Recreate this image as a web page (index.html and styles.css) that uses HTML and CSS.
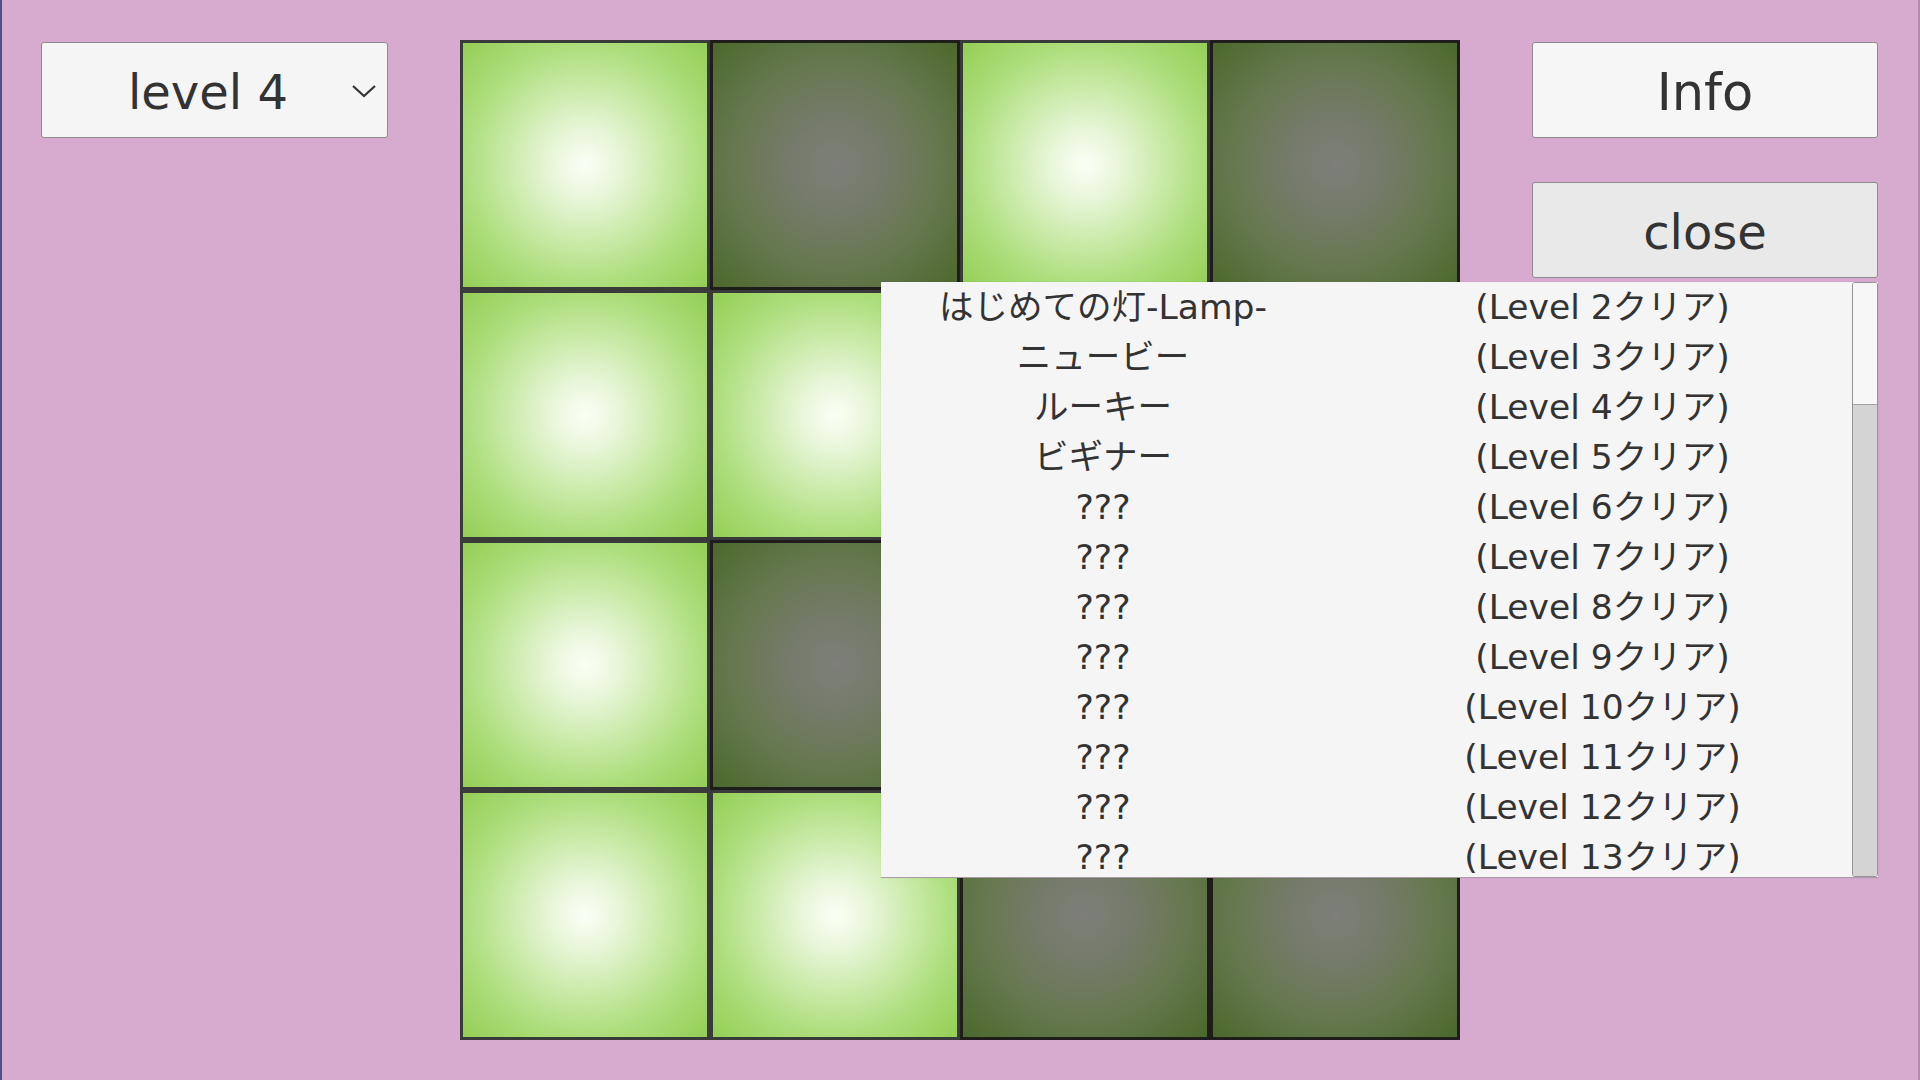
FILE: index.html
```html
<!DOCTYPE html>
<html lang="ja">
<head>
<meta charset="utf-8">
<title>Lamp</title>
<link rel="stylesheet" href="styles.css">
</head>
<body>
<div class="app">
  <div class="left-col">
    <div class="combo">
      <span class="combo-text">level 4</span>
      <svg class="chevron" width="26" height="16" viewBox="0 0 26 16"><polyline points="2,3 13,13 24,3" fill="none" stroke="#333" stroke-width="2.2"/></svg>
    </div>
  </div>

  <div class="board">
    <div class="cell on"></div><div class="cell off"></div><div class="cell on"></div><div class="cell off"></div>
    <div class="cell on"></div><div class="cell on"></div><div class="cell off"></div><div class="cell on"></div>
    <div class="cell on"></div><div class="cell off"></div><div class="cell on"></div><div class="cell off"></div>
    <div class="cell on"></div><div class="cell on"></div><div class="cell off"></div><div class="cell off"></div>
  </div>

  <div class="right-col">
    <div class="btn btn-info">Info</div>
    <div class="btn btn-close">close</div>
  </div>

  <div class="popup">
    <div class="list">
      <div class="row"><span class="name">はじめての灯-Lamp-</span><span class="cond">(Level 2クリア)</span></div>
      <div class="row"><span class="name">ニュービー</span><span class="cond">(Level 3クリア)</span></div>
      <div class="row"><span class="name">ルーキー</span><span class="cond">(Level 4クリア)</span></div>
      <div class="row"><span class="name">ビギナー</span><span class="cond">(Level 5クリア)</span></div>
      <div class="row"><span class="name">???</span><span class="cond">(Level 6クリア)</span></div>
      <div class="row"><span class="name">???</span><span class="cond">(Level 7クリア)</span></div>
      <div class="row"><span class="name">???</span><span class="cond">(Level 8クリア)</span></div>
      <div class="row"><span class="name">???</span><span class="cond">(Level 9クリア)</span></div>
      <div class="row"><span class="name">???</span><span class="cond">(Level 10クリア)</span></div>
      <div class="row"><span class="name">???</span><span class="cond">(Level 11クリア)</span></div>
      <div class="row"><span class="name">???</span><span class="cond">(Level 12クリア)</span></div>
      <div class="row"><span class="name">???</span><span class="cond">(Level 13クリア)</span></div>
    </div>
    <div class="scrollbar">
      <div class="track"></div>
      <div class="thumb"></div>
    </div>
  </div>
</div>
</body>
</html>
```

FILE: styles.css
```css
* { box-sizing: border-box; }

html, body {
  margin: 0;
  padding: 0;
  width: 1920px;
  height: 1080px;
  overflow: hidden;
}

body {
  background: #d6abcf;
  font-family: "DejaVu Sans", "Noto Sans CJK JP", sans-serif;
  color: #333333;
}

.app {
  position: relative;
  width: 1920px;
  height: 1080px;
  border-left: 2px solid #4e5282;
  border-right: 2px solid #b58bb2;
  display: flex;
  align-items: flex-start;
  padding: 40px 0 0 39px;
}

.left-col {
  width: 347px;
  padding-top: 2px;
}

.combo {
  height: 96px;
  background: #f5f5f5;
  border: 1px solid #908a90;
  border-radius: 3px;
  display: flex;
  align-items: center;
  padding: 4px 0 0 86px;
  position: relative;
}

.combo-text {
  font-size: 48px;
  line-height: 1;
}

.chevron {
  position: absolute;
  right: 10px;
  top: 40px;
}

.board {
  margin-left: 72px;
  width: 1000px;
  height: 1000px;
  display: grid;
  grid-template-columns: repeat(4, 250px);
  grid-template-rows: repeat(4, 250px);
}

.cell {
  border: 3.5px solid #3a3a3a;
}

.cell.on {
  background: radial-gradient(circle farthest-corner at 50% 50%, #fbfff6 0%, #e6f5d6 22%, #c6e9a3 48%, #aadc78 72%, #94cf55 100%);
}

.cell.off {
  border-color: #1f1c1c;
  background: radial-gradient(circle farthest-corner at 50% 50%, #7d7f78 0%, #767b6c 25%, #66784f 60%, #526c34 90%, #4c682c 100%);
}

.right-col {
  margin-left: 72px;
  width: 346px;
  padding-top: 2px;
  display: flex;
  flex-direction: column;
  gap: 44px;
}

.btn {
  height: 96px;
  background: #f6f6f6;
  border: 1px solid #908a90;
  border-radius: 3px;
  display: flex;
  align-items: center;
  justify-content: center;
  padding-top: 4px;
  line-height: 1;
}

.btn-info { font-size: 51px; }

.btn-close {
  font-size: 48px;
  background: #e9e9e9;
}

.popup {
  position: absolute;
  left: 879px;
  top: 282px;
  width: 997px;
  height: 596px;
  background: #f5f5f5;
  border-bottom: 1px solid #aa9aa8;
  display: flex;
  box-shadow: 0 0 1px rgba(0,0,0,0.15);
}

.list {
  flex: 1;
  overflow: hidden;
}

.row {
  height: 50px;
  display: grid;
  grid-template-columns: 444px 1fr;
  font-size: 34.5px;
  line-height: 50px;
  white-space: nowrap;
}

.name { text-align: center; }

.cond {
  text-align: center;
  padding-left: 28px;
}

.scrollbar {
  width: 26px;
  display: flex;
  flex-direction: column;
  border: 1px solid #9a929a;
  border-radius: 3px;
  overflow: hidden;
}

.track {
  height: 122px;
  background: #f7f7f7;
  border-bottom: 1px solid #a8a2a8;
}

.thumb {
  flex: 1;
  background: #d4d4d4;
}
```
